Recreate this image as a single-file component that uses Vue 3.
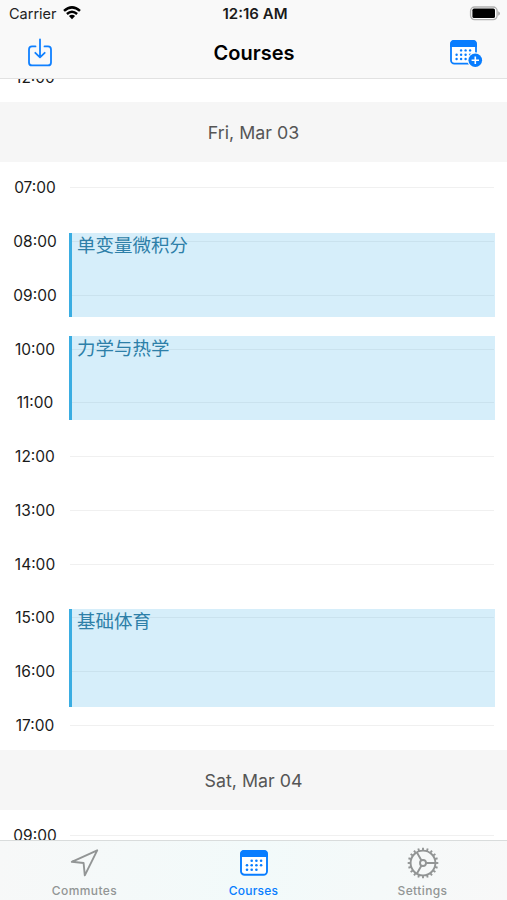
<script setup>
const HOUR = 53.75
const days = [
  { title: '', hours: ['12:00'], events: [] },
  {
    title: 'Fri, Mar 03',
    hours: ['07:00', '08:00', '09:00', '10:00', '11:00', '12:00', '13:00', '14:00', '15:00', '16:00', '17:00'],
    events: [
      { name: '单变量微积分', from: 50, to: 145 },
      { name: '力学与热学', from: 165, to: 260 },
      { name: '基础体育', from: 470, to: 580 },
    ],
  },
  { title: 'Sat, Mar 04', hours: ['09:00'], events: [] },
]
// Event bounds are minutes after the first hour line of the day.
const place = (e) => ({
  top: `${26 + (e.from / 60) * HOUR}px`,
  height: `${((e.to - e.from) / 60) * HOUR - 0.7}px`,
})
const dots = [[1, 0], [2, 0], [3, 0], [0, 1], [1, 1], [2, 1], [3, 1], [0, 2], [1, 2], [2, 2]]
const teeth = Array.from({ length: 20 }, (_, i) => i * 18)
</script>

<template>
  <div class="screen">
    <header class="top">
      <div class="status">
        <div class="carrier">
          <span>Carrier</span>
          <svg width="18" height="14" viewBox="0 0 18 14">
            <g fill="none" stroke="#000" stroke-width="2.5">
              <path d="M1 4.9Q9 -2.1 17 4.9" />
              <path d="M3.9 8Q9 3.6 14.1 8" />
            </g>
            <path d="M5.9 10Q9 7.4 12.1 10L9 13.3Z" fill="#000" />
          </svg>
        </div>
        <div class="clock">12:16 AM</div>
        <svg class="battery" width="32" height="16" viewBox="0 0 32 16">
          <rect x="1.6" y="1" width="26.5" height="12.6" rx="4" fill="#fff" stroke="#b0b0b0" stroke-width="1.4" />
          <rect x="3.4" y="2.6" width="22.6" height="9.4" rx="1.6" fill="#000" />
          <path d="M29.2 5.2Q31 6 31 7.5T29.2 9.8Z" fill="#a8a8a8" />
        </svg>
      </div>
      <nav class="bar">
        <svg width="26" height="30" viewBox="0 0 26 30">
          <g fill="none" stroke="#1080ff" stroke-width="1.8" stroke-linecap="round" stroke-linejoin="round">
            <path d="M8.5 8.4H5Q2 8.4 2 11.4V24.4Q2 27.4 5 27.4H21Q24 27.4 24 24.4V11.4Q24 8.4 21 8.4H17.5" />
            <path d="M13 1.5V19.2M8.3 14.8L13 19.4L17.7 14.8" />
          </g>
        </svg>
        <h1>Courses</h1>
        <svg width="34" height="30" viewBox="0 0 34 30">
          <rect x="2" y="3" width="25" height="22.6" rx="3.4" fill="#fff" stroke="#087dff" stroke-width="1.8" />
          <path d="M1.1 9V6Q1.1 2.1 5 2.1H24Q27.9 2.1 27.9 6V9Z" fill="#087dff" />
          <circle v-for="([x, y], i) in dots" :key="i" :cx="7.6 + x * 4.5" :cy="12.4 + y * 4.3" r="1.2" fill="#087dff" />
          <circle cx="26.3" cy="22.3" r="8" fill="#f9f9f9" />
          <circle cx="26.3" cy="22.3" r="6.8" fill="#087dff" />
          <path d="M22.6 22.3H30M26.3 18.6V26" stroke="#fff" stroke-width="1.6" />
        </svg>
      </nav>
    </header>

    <main class="agenda">
      <section v-for="(day, d) in days" :key="d" class="day">
        <h2 v-if="day.title">{{ day.title }}</h2>
        <div class="timeline">
          <div v-for="h in day.hours" :key="h" class="hour">
            <span class="label">{{ h }}</span><i class="line"></i>
          </div>
          <div v-for="e in day.events" :key="e.name" class="event" :style="place(e)">{{ e.name }}</div>
        </div>
      </section>
    </main>

    <footer class="tabs">
      <div class="tab">
        <svg width="32" height="32" viewBox="0 0 32 32">
          <path d="M28.2 3.3L2.8 14.8L14.6 16L15.8 28.3Z" fill="none" stroke="#929595" stroke-width="1.9" stroke-linejoin="round" />
        </svg>
        <span>Commutes</span>
      </div>
      <div class="tab active">
        <svg width="32" height="32" viewBox="0 0 32 32">
          <rect x="3" y="4" width="26" height="23.8" rx="3.6" fill="#fff" stroke="#087dff" stroke-width="1.9" />
          <path d="M2 10V7.2Q2 3 6.2 3H25.8Q30 3 30 7.2V10Z" fill="#087dff" />
          <circle v-for="([x, y], i) in dots" :key="i" :cx="9 + x * 4.7" :cy="13.8 + y * 4.5" r="1.3" fill="#087dff" />
        </svg>
        <span>Courses</span>
      </div>
      <div class="tab">
        <svg width="32" height="32" viewBox="0 0 32 32">
          <g fill="none" stroke="#929595" stroke-width="1.9">
            <circle cx="16" cy="16" r="12.4" />
            <circle cx="16" cy="16" r="3" />
            <path d="M19 16H28M14.5 13.4L9.8 5.3M14.5 18.6L9.8 26.7" />
            <path v-for="a in teeth" :key="a" d="M16 .7V3.4" :transform="`rotate(${a} 16 16)`" />
          </g>
        </svg>
        <span>Settings</span>
      </div>
    </footer>
  </div>
</template>

<style>
body { margin: 0; overflow: hidden; }
</style>

<style scoped>
.screen {
  width: 507px; height: 900px; display: flex; flex-direction: column; overflow: hidden;
  background: #fff; color: #1a1a1a; font-family: Inter, "Noto Sans CJK SC", sans-serif;
}
.top { flex: none; height: 78px; background: #f9f9f9; border-bottom: 1px solid #e2e2e2; }
.status {
  height: 27px; padding: 0 6px 0 9px; display: grid; grid-template-columns: 1fr auto 1fr;
  align-items: center; font-size: 14.5px; box-sizing: border-box;
}
.carrier { display: flex; align-items: center; gap: 6px; color: #222; }
.carrier svg { margin-top: -2px; }
.clock { font-weight: 600; font-size: 15px; }
.battery { justify-self: end; }
.bar { height: 51px; padding: 0 24px 0 27px; display: grid; grid-template-columns: 1fr auto 1fr; align-items: center; }
.bar svg:last-child { justify-self: end; }
h1 { margin: 0 2px 0 0; font-size: 20px; line-height: 24px; font-weight: 600; color: #000; }
.agenda { flex: 1; min-height: 0; overflow: hidden; }
.day:first-child { margin-top: -27.5px; }
h2 {
  margin: 0; height: 60px; line-height: 61px; text-align: center;
  background: #f6f6f6; color: #555; font-size: 17.8px; font-weight: 400;
}
.timeline { position: relative; display: flex; flex-direction: column; }
.timeline::after { content: ""; margin-top: -2.4px; }
.hour { flex: none; height: 53.75px; display: flex; align-items: center; padding-right: 13px; }
.hour:first-child { margin-top: -0.9px; }
.label { width: 70px; text-align: center; font-size: 15.5px; }
.line { flex: 1; height: 1px; background: #f0f0f0; }
.event {
  position: absolute; left: 69px; right: 12px; box-sizing: border-box;
  border-left: 3px solid #3aade2; background: rgba(52, 170, 228, .2); background-clip: padding-box;
  padding-left: 5px; color: #2d7fa8; font-size: 18.5px; line-height: 24px;
}
.tabs {
  flex: none; height: 60px; box-sizing: border-box; border-top: 1px solid #d9dcdc;
  background: linear-gradient(100deg, #f7f8f8, #f2fafa 50%, #f8f8f8); display: grid; grid-template-columns: repeat(3, 1fr);
}
.tab {
  display: flex; flex-direction: column; align-items: center; padding-top: 6px;
  color: #929595; font-size: 12px; line-height: 16px; font-weight: 500; letter-spacing: .4px; gap: 4px;
}
.active { color: #087dff; letter-spacing: .2px; }
</style>
